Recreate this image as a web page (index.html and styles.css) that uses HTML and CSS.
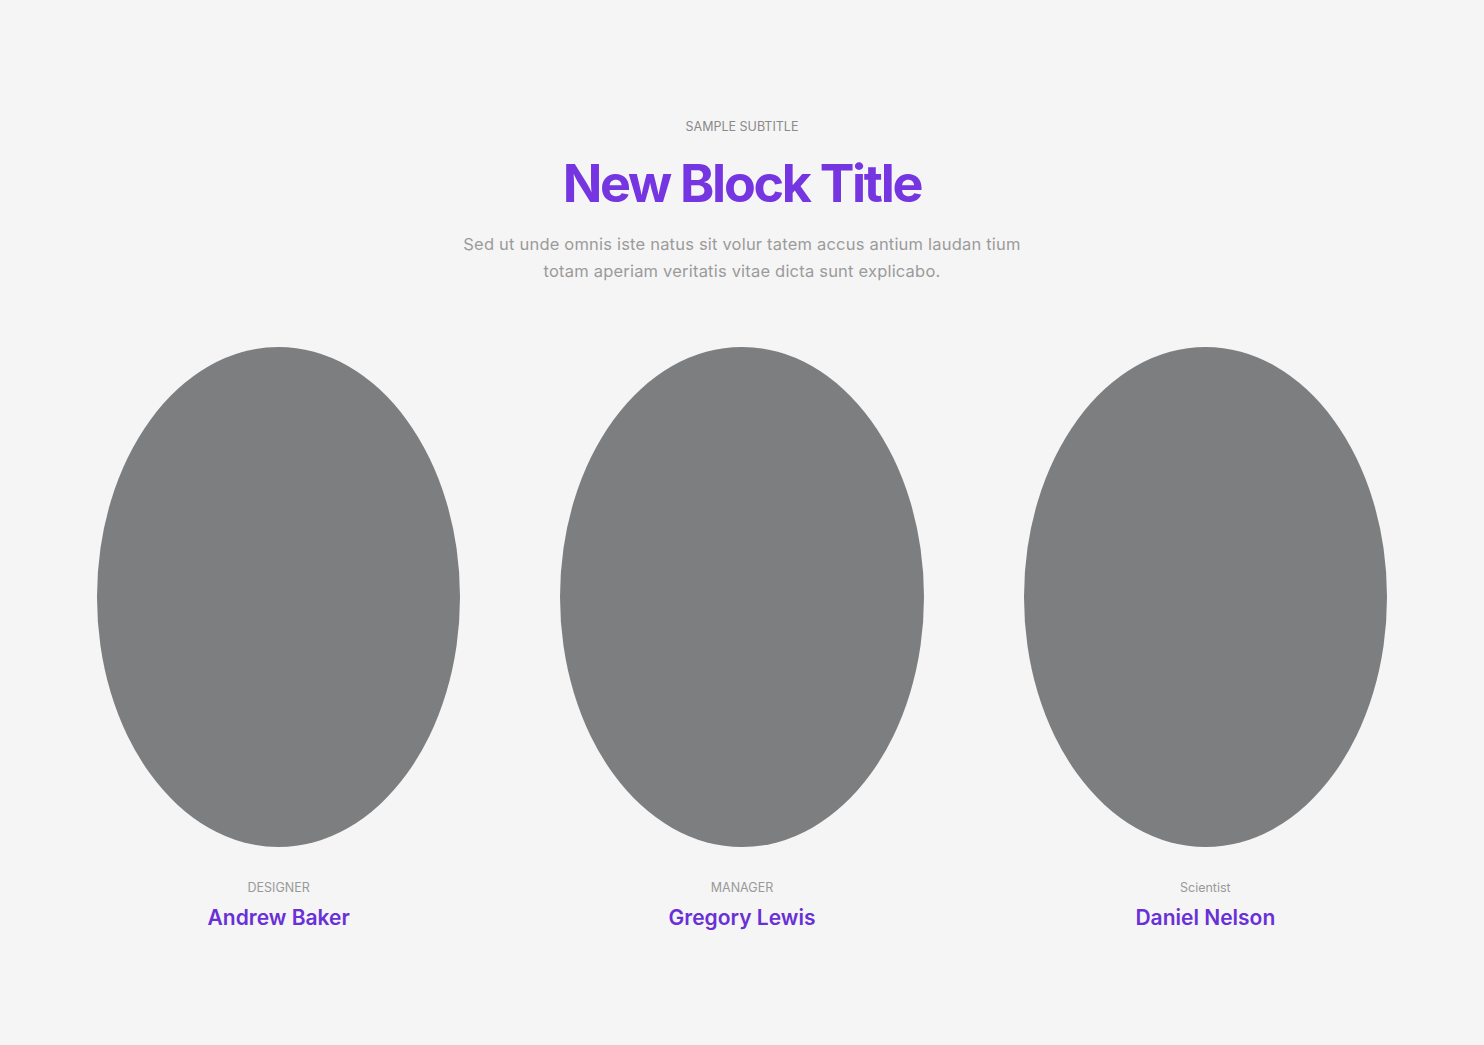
FILE: index.html
```html
<!DOCTYPE html>
<html>
<head>
<meta charset="utf-8">
<link rel="stylesheet" href="styles.css">
</head>
<body>
<section class="team">
  <header class="head">
    <p class="subtitle">SAMPLE SUBTITLE</p>
    <h1 class="title">New Block Title</h1>
    <p class="lead">Sed ut unde omnis iste natus sit volur tatem accus antium laudan tium<br>totam aperiam veritatis vitae dicta sunt explicabo.</p>
  </header>
  <div class="grid">
    <div class="member">
      <div class="photo"></div>
      <p class="role">DESIGNER</p>
      <h3 class="name">Andrew Baker</h3>
    </div>
    <div class="member">
      <div class="photo"></div>
      <p class="role">MANAGER</p>
      <h3 class="name">Gregory Lewis</h3>
    </div>
    <div class="member">
      <div class="photo"></div>
      <p class="role">Scientist</p>
      <h3 class="name">Daniel Nelson</h3>
    </div>
  </div>
</section>
</body>
</html>
```
FILE: styles.css
```css
* { box-sizing: border-box; }
html, body { margin: 0; padding: 0; }
body {
  background: #f5f5f5;
  font-family: Inter, "Noto Sans", sans-serif;
  width: 1484px;
  height: 1045px;
  overflow: hidden;
}
.team {
  padding: 119px 97px 0;
}
.head {
  display: flex;
  flex-direction: column;
  align-items: center;
  text-align: center;
}
.subtitle {
  margin: 0;
  font-size: 12.5px;
  line-height: 16px;
  color: #8a8a8a;
  letter-spacing: 0;
}
.title {
  margin: 17px 0 0;
  font-size: 52px;
  line-height: 64px;
  font-weight: 700;
  color: #7535e0;
  letter-spacing: -2.3px;
}
.lead {
  margin: 15px 0 0;
  font-size: 16.5px;
  line-height: 27px;
  color: #9b9b9b;
  letter-spacing: 0.2px;
}
.grid {
  margin-top: 62px;
  display: grid;
  grid-template-columns: repeat(3, 1fr);
  column-gap: 100px;
}
.member {
  display: flex;
  flex-direction: column;
  align-items: center;
}
.photo {
  width: 100%;
  height: 500px;
  border-radius: 50%;
  background: #7d7e80;
}
.role {
  margin: 33px 0 0;
  font-size: 12.5px;
  line-height: 16px;
  color: #999;
}
.name {
  margin: 9px 0 0;
  font-size: 21px;
  line-height: 26px;
  font-weight: 600;
  color: #6a30d8;
  letter-spacing: 0;
}
```
